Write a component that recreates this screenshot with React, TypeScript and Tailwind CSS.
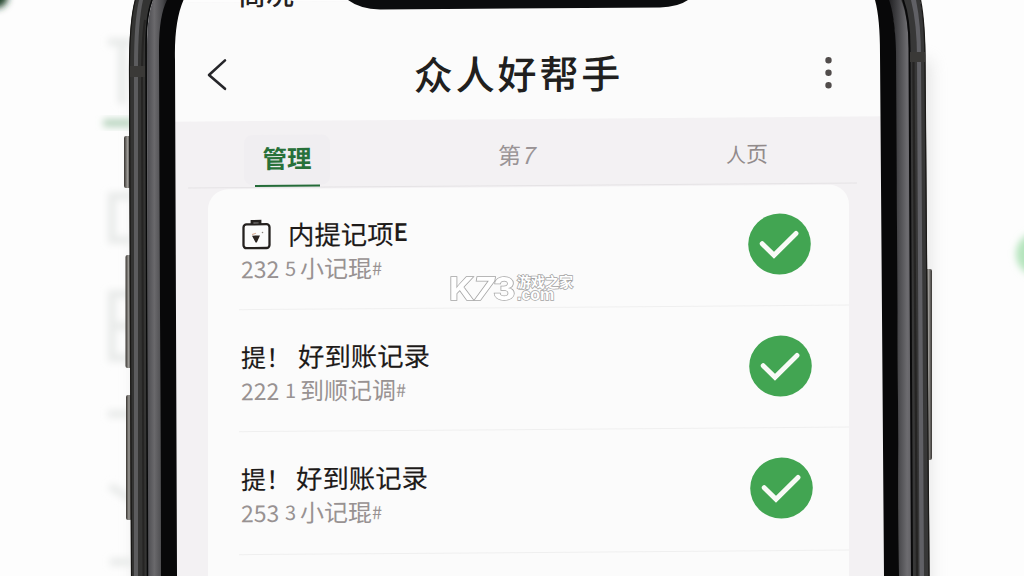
import React from "react";

type Row = {
  icon?: boolean;
  lead?: string;
  title: string;
  tail?: string;
  code: string;
  mark: string;
  note: string;
  rowClass: string;
  titleClass: string;
  checkClass: string;
};

const rows: Row[] = [
  {
    icon: true,
    title: "内提记项",
    tail: "E",
    code: "232",
    mark: "5",
    note: "小记琨",
    rowClass: "h-[121px] pr-[38px]",
    titleClass: "ml-[17px]",
    checkClass: "mb-[3px]",
  },
  {
    lead: "提！",
    title: "好到账记录",
    code: "222",
    mark: "1",
    note: "到顺记调",
    rowClass: "h-[122px] pr-[37px]",
    titleClass: "ml-[5px]",
    checkClass: "mb-[3px]",
  },
  {
    lead: "提！",
    title: "好到账记录",
    code: "253",
    mark: "3",
    note: "小记琨",
    rowClass: "h-[123px] pr-[36px]",
    titleClass: "ml-[3px]",
    checkClass: "mb-[3px]",
  },
];

function CaseIcon() {
  return (
    <svg className="h-[31px] w-[30px] shrink-0" viewBox="0 0 30 31" fill="none">
      <rect x="2.500" y="5.200" width="26" height="23.800" rx="3" stroke="#25211f" strokeWidth="2.300" />
      <path d="M11 5V2.200h8V5" stroke="#25211f" strokeWidth="2.800" />
      <path d="M11 16.500h8L15.800 23.500h-1.200z" fill="#2b2421" />
      <path d="M11 15.500l4-1.400" stroke="#dcb39c" strokeWidth="1.200" />
      <circle cx="21.500" cy="13.500" r="0.800" fill="#8b8581" />
    </svg>
  );
}

function CheckBadge({ className }: { className: string }) {
  return (
    <svg className={`h-[62px] w-[63px] shrink-0 ${className}`} viewBox="0 0 63 62" fill="none">
      <ellipse cx="31.5" cy="31" rx="31.3" ry="30.5" fill="#42a552" />
      <path d="M14.200 30.500L26 42.200L48 20.500" stroke="#f8faf6" strokeWidth="4.900" strokeLinecap="round" />
    </svg>
  );
}

function Backdrop() {
  return (
    <svg className="absolute inset-0 h-full w-full" viewBox="0 0 1024 576">
      <defs>
        <filter id="soft" x="-50%" y="-50%" width="200%" height="200%">
          <feGaussianBlur stdDeviation="3.5" />
        </filter>
        <filter id="wide" x="-50%" y="-50%" width="200%" height="200%">
          <feGaussianBlur stdDeviation="8" />
        </filter>
      </defs>
      <rect width="1024" height="576" fill="#fdfdfd" />
      <circle cx="-4" cy="-4" r="12" fill="#1d4027" filter="url(#soft)" />
      <path d="M135 60V600H931V60z" fill="#b8b8b8" opacity="0.35" filter="url(#wide)" />
      <g filter="url(#soft)" fill="none" stroke="#e9ebea" strokeWidth="8">
        <path d="M108 42h24M122 42v62" />
        <path d="M132 196h-20v44h20M132 294h-20v64h20M112 326h20M108 414h24M132 500l-22-14M110 562h24" />
      </g>
      <rect x="103" y="119" width="30" height="8" rx="3" fill="#b9d5c0" filter="url(#soft)" />
      <circle cx="1038" cy="254" r="22" fill="#b4e4bc" filter="url(#soft)" />
    </svg>
  );
}

function PhoneFrame() {
  return (
    <svg className="pointer-events-none absolute inset-0 h-full w-full" viewBox="0 0 1024 576">
      <defs>
        <linearGradient id="bandL" x1="0" x2="1" y1="0" y2="0">
          <stop offset="0" stopColor="#4a4a4e" />
          <stop offset="0.35" stopColor="#6a696c" />
          <stop offset="0.75" stopColor="#48484b" />
          <stop offset="1" stopColor="#232325" />
        </linearGradient>
        <linearGradient id="bandR" x1="0" x2="1" y1="0" y2="0">
          <stop offset="0" stopColor="#1d1d1f" />
          <stop offset="0.35" stopColor="#3e3e41" />
          <stop offset="0.8" stopColor="#6d6c70" />
          <stop offset="1" stopColor="#626165" />
        </linearGradient>
        <linearGradient id="key" x1="0" x2="1" y1="0" y2="0">
          <stop offset="0" stopColor="#37332f" />
          <stop offset="0.5" stopColor="#9b9995" />
          <stop offset="1" stopColor="#34312f" />
        </linearGradient>
      </defs>

      <rect x="124" y="136" width="7" height="52" rx="2" fill="url(#key)" />
      <rect x="125.500" y="255" width="6" height="113" rx="2" fill="url(#key)" />
      <rect x="126" y="395" width="6" height="125" rx="2" fill="url(#key)" />
      <rect x="925" y="269" width="7" height="191" rx="2" fill="url(#key)" />

      <path d="M135 0Q129 22 129 70L131 576H148L147 40Q147 14 153 0z" fill="#343433" />
      <path d="M139 0Q134 22 134 66V576H138V66Q138 22 143 0z" fill="#5c5c5e" />
      <path d="M135.300 0Q129.500 22 129.500 70L131.500 576" fill="none" stroke="#181715" strokeWidth="1.2" />
      <path d="M145 20Q142 40 142 80L143.500 576" fill="none" stroke="#252423" strokeWidth="2" />
      <path d="M153 0Q147 16 147 46L148 576H161L160 46Q160 16 168 0z" fill="url(#bandL)" />
      <path d="M152 0Q146 16 146 46L147.500 576" fill="none" stroke="#070809" strokeWidth="1.5" />
      <path d="M167 0Q159 16 159 48L161 576H177L175 60Q174 22 183.500 0z" fill="#080809" />
      <rect x="130" y="66" width="15" height="11" fill="#3a3937" />

      <path d="M900 0Q908 22 908 55L911 576H929.500L925.500 65Q925.500 22 920 0z" fill="#373737" />
      <path d="M916 0Q921 24 921 58L924 576H919.500L917 58Q917 24 911 0z" fill="#606065" />
      <path d="M920.500 0Q925 22 925 65L929 576" fill="none" stroke="#1b1a18" strokeWidth="1.3" />
      <path d="M913.500 62V80L917 576" fill="none" stroke="#252423" strokeWidth="2.2" />
      <path d="M888 0Q895 18 895 48L899 576H912L909 48Q908 16 901 0z" fill="url(#bandR)" />
      <path d="M903 0Q909.500 18 909.500 48L912 576" fill="none" stroke="#09090a" strokeWidth="2" />
      <path d="M875 0Q880 18 880 54L884 576H899L896 52Q895 16 889 0z" fill="#080809" />
      <rect x="910" y="52" width="15" height="10" fill="#3a3937" />

      <path d="M348 0Q360 9 380 9.500L660 7.500Q678 7 688 0z" fill="#0b0c0e" />
    </svg>
  );
}

function Screen() {
  return (
    <div className="flex h-[600px] w-[711px] shrink-0 -skew-y-[0.44deg] flex-col bg-[#f3f1f3]">
      <header className="relative flex h-[119px] shrink-0 items-center justify-between bg-[#fbfbfb] pr-[50px] pl-[31px] pt-[25px]">
        <div className="absolute -top-[23px] left-[64px] text-[28px] leading-[28px] font-medium text-[#25211f]">
          商况
        </div>
        <svg className="h-[34px] w-[24px]" viewBox="0 0 24 34" fill="none">
          <path d="M20 3L4 17.500L20 31.500" stroke="#26262a" strokeWidth="2.600" strokeLinecap="round" strokeLinejoin="round" />
        </svg>
        <h1 className="-ml-[15px] mb-[1px] text-[39px] leading-[50px] font-medium tracking-[2.9px] whitespace-nowrap text-[#211f1e]">
          众人好帮手
        </h1>
        <svg className="mt-[6px] h-[34px] w-[12px]" viewBox="0 0 12 34">
          <circle cx="5.500" cy="4.500" r="3.200" fill="#514c4b" />
          <circle cx="5.500" cy="17" r="3.200" fill="#514c4b" />
          <circle cx="5.500" cy="29.500" r="3.200" fill="#514c4b" />
        </svg>
      </header>

      <nav className="mr-[28px] ml-[14px] flex h-[67px] shrink-0 border-b border-[#e5e3e5] pl-[56px]">
        <div className="flex w-[86px] flex-col items-center rounded-t-xl pt-[14px]">
          <div className="flex h-[52px] w-[86px] flex-col items-center rounded-lg bg-[#f0eef1]">
            <span className="mt-[5px] text-[24.5px] leading-[36px] font-bold text-[#28713a]">管理</span>
          </div>
          <div className="h-[2.500px] w-[65px] shrink-0 bg-[#246b38]" />
        </div>
        <span className="ml-[168px] w-[42px] pt-[18px] text-[23px] leading-[34px] whitespace-nowrap text-[#9a9496]">
          第<i>7</i>
        </span>
        <span className="ml-[186px] pt-[18px] text-[22px] leading-[34px] whitespace-nowrap text-[#928b8b]">
          <span className="text-[20px]">人</span>页
        </span>
      </nav>

      <section className="mr-[36px] ml-[34px] mt-px flex-1 rounded-t-[20px] bg-[#fbfbfb]">
        {rows.map((row, index) => (
          <React.Fragment key={index}>
            <div className={`flex items-center justify-between pl-[33px] ${row.rowClass}`}>
              <div className="whitespace-nowrap pt-[2px]">
                <div className="flex h-[35px] items-center pt-[2px] text-[26.4px] leading-[30px] text-[#1d1a19] [-webkit-text-stroke:0.15px_#1d1a19]">
                  {row.icon && <CaseIcon />}
                  {row.lead && <span className="inline-block w-[52px] text-[25px]">{row.lead}</span>}
                  <span className={row.titleClass}>{row.title}</span>
                  {row.tail && (
                    <span className="mb-[4px] text-[24px] leading-[20px] font-medium">{row.tail}</span>
                  )}
                </div>
                <div className="flex h-[35px] items-center text-[23px] leading-[30px] text-[#989292]">
                  <span className="w-[44px]">{row.code}</span>
                  <span className="w-[15px] text-[20px]">{row.mark}</span>
                  <span className="text-[24px]">{row.note}</span>
                  <span className="text-[18px]">#</span>
                </div>
              </div>
              <CheckBadge className={row.checkClass} />
            </div>
            <div className="-mt-px ml-[31px] h-px bg-[#efefef]" />
          </React.Fragment>
        ))}
      </section>
    </div>
  );
}

function Watermark() {
  return (
    <div className="absolute top-[272px] left-[449px] flex h-[32px] items-center text-white">
      <div className="flex w-[68px] items-center">
        <span className="origin-left scale-x-[1.12] font-['Inter'] text-[31px] leading-[31px] font-bold tracking-[-0.5px] [-webkit-text-stroke:1.5px_#a4a4a4] [paint-order:stroke]">
          K<i>7</i>3
        </span>
      </div>
      <div className="flex flex-col whitespace-nowrap">
        <span className="text-[14px] leading-[15px] font-bold [-webkit-text-stroke:1.5px_#a4a4a4] [paint-order:stroke]">
          游戏之家
        </span>
        <span className="-mt-[2px] font-['Liberation_Sans'] text-[16px] leading-[15px] font-bold [-webkit-text-stroke:1.5px_#a4a4a4] [paint-order:stroke]">
          .com
        </span>
      </div>
    </div>
  );
}

export default function App() {
  return (
    <div className="relative h-[576px] w-[1024px] overflow-hidden bg-[#fdfdfd] font-['Noto_Sans_CJK_SC',sans-serif]">
      <Backdrop />
      <main className="relative flex h-[576px] pl-[174px]">
        <Screen />
      </main>
      <PhoneFrame />
      <Watermark />
    </div>
  );
}
